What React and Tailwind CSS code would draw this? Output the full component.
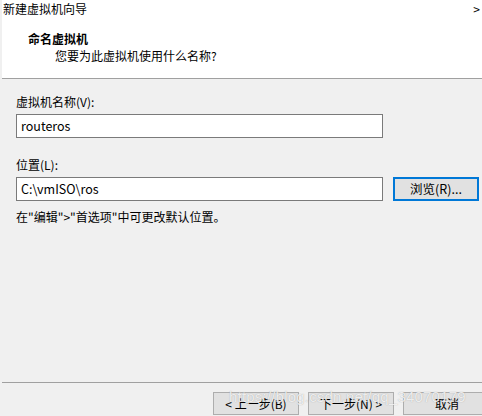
const font = { fontFamily: '"Noto Sans CJK SC", "Liberation Sans", sans-serif' };

function Btn({ children, className = "" }) {
    return (
        <div className={`flex h-[23px] w-[86px] shrink-0 items-center justify-center border border-[#adadad] bg-[#e1e1e1] text-[12px] text-black ${className}`}>
            {children}
        </div>
    );
}

export default function App() {
    return (
        <div className="relative h-[416px] w-[482px] overflow-hidden bg-[#f0f0f0] pl-[2px] text-[12px] leading-none text-black" style={font}>
            {/* 头部 */}
            <div className="h-[79px] border-b border-[#a0a0a0] bg-white">
                <div className="flex items-start justify-between pt-[2px] pl-[1px] pr-[2px] leading-[14px]">
                    <span>新建虚拟机向导</span>
                    <span className="text-[12px]">&gt;</span>
                </div>
                <div className="pl-[26px] pt-[17px] font-bold">命名虚拟机</div>
                <div className="pl-[53px] pt-[5px]">您要为此虚拟机使用什么名称?</div>
            </div>

            {/* 内容 */}
            <div className="h-[304px] border-b border-[#a0a0a0] pl-[14px] pt-[17px]">
                <div>虚拟机名称(V):</div>
                <div className="mt-[6px] flex h-[24px] w-[367px] items-center border border-[#7a7a7a] bg-white pl-[4px] text-[12.5px]">routeros</div>

                <div className="mt-[21px]">位置(L):</div>
                <div className="mt-[6px] flex items-center gap-[10px]">
                    <div className="flex h-[24px] w-[367px] items-center border border-[#7a7a7a] bg-white pl-[4px] text-[12.5px]">C:\vmISO\ros</div>
                    <div className="flex h-[24px] w-[86px] items-center justify-center border-2 border-[#0078d7] bg-[#e1e1e1] text-[12.5px]">浏览(R)...</div>
                </div>
                <div className="mt-[10px]">在"编辑"&gt;"首选项"中可更改默认位置。</div>
            </div>

            {/* 底部按钮 */}
            <div className="flex gap-[9px] pl-[211px] pt-[9px]">
                <Btn>&lt; 上一步(B)</Btn>
                <Btn>下一步(N) &gt;</Btn>
                <Btn className="w-[88px]">取消</Btn>
            </div>

            {/* 水印 */}
            <div className="pointer-events-none absolute left-[229px] top-[389px] text-[15px] tracking-[0.2px] text-white/80" style={{ fontFamily: '"Liberation Sans", sans-serif', textShadow: "0 0 1px rgba(110,110,110,0.6)" }}>
                https://blog.csdn.net/qq_34070179
            </div>
        </div>
    );
}
